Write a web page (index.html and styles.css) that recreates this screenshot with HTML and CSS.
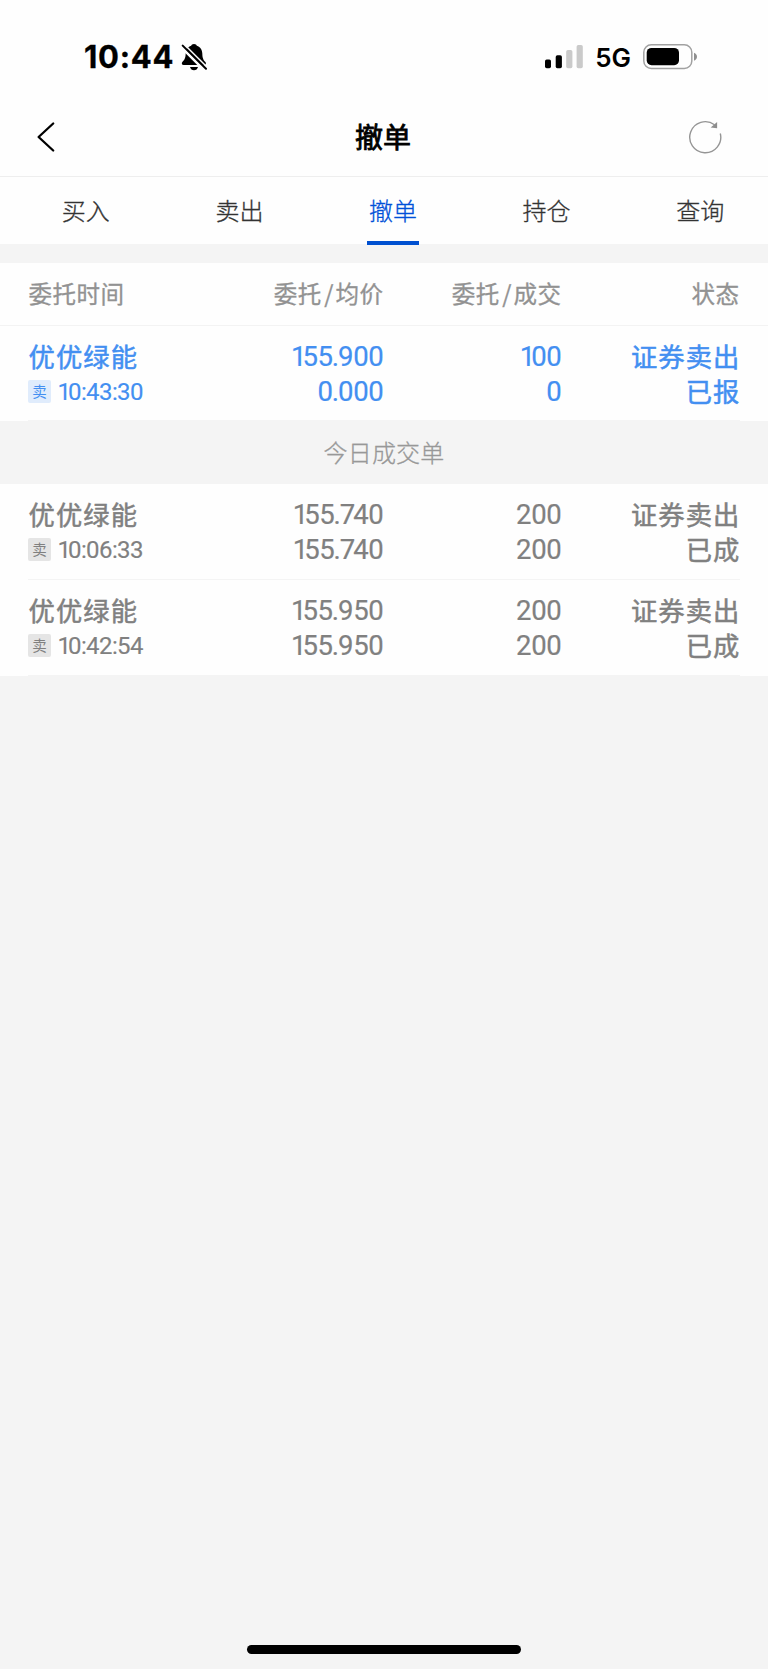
FILE: index.html
```html
<!DOCTYPE html>
<html lang="zh-CN">
<head>
<meta charset="utf-8">
<title>撤单</title>
<link rel="stylesheet" href="styles.css">
</head>
<body>
<div class="screen">
  <header class="status">
    <span class="clock">10:44</span>
    <svg class="bell" width="26" height="28" viewBox="0 0 26 28">
      <path d="M13 1C14.6 1 15.5 1.8 15.8 2.8C19.5 3.9 21.2 7 21.3 10.5C21.4 15.5 22.5 17 24.2 18.8C25.5 20.2 25 22 23 22H2.7C.7 22 .3 20.200 1.500 18.800C3.600 16.600 4.500 15 4.700 10.500C4.800 7 6.500 3.900 10.200 2.800C10.500 1.800 11.400 1 13 1Z"/>
      <path d="M9 24H17C16.500 26 15 27.300 13 27.300S9.500 26 9 24Z"/>
      <path d="M-.5 3.200L24 27.600" stroke="#fefefe" stroke-width="3"/>
      <path d="M2.600 .7L27 25.100" stroke="#fefefe" stroke-width="1.600"/>
      <path d="M1.700 2.600L25 25.800" stroke="#000" stroke-width="2" stroke-linecap="round"/>
    </svg>
    <div class="indicators">
      <svg class="signal" width="38" height="26" viewBox="0 0 38 26">
        <rect x="0" y="15.500" width="6" height="8.800" rx="1.700"/>
        <rect x="10.700" y="11.200" width="6.200" height="13.100" rx="1.700"/>
        <g fill="#cacaca"><rect x="21.200" y="6" width="6.200" height="18.300" rx="1.700"/><rect x="31.600" y="1" width="6.200" height="23.300" rx="1.700"/></g>
      </svg>
      <span class="network">5G</span>
      <svg class="battery" width="56" height="26" viewBox="0 0 56 26">
        <rect x=".8" y=".8" width="48" height="23.600" rx="7.500" fill="none" stroke="#a1a1a1" stroke-width="1.500"/>
        <rect x="3.700" y="3.900" width="32.300" height="17.300" rx="4.800"/>
        <path d="M51 8.800C55 10.200 55 15.400 51 16.800Z" fill="#8f8f8f"/>
      </svg>
    </div>
  </header>

  <nav class="navbar">
    <svg class="back" width="20" height="32" viewBox="0 0 20 32"><path d="M17.200 2.500L2.600 16L17.200 29.500" fill="none" stroke="#000" stroke-width="2.300" stroke-linecap="round" stroke-linejoin="round"/></svg>
    <h1 class="title">撤单</h1>
    <svg class="refresh" width="34" height="34" viewBox="0 0 34 34">
      <path d="M32.300 13.500A15.500 15.500 0 1 1 26.500 4.800" fill="none" stroke="#959595" stroke-width="1.400"/>
      <path d="M29.100 2V8.200L22.700 7.400Z" fill="#8d8d8d"/>
    </svg>
  </nav>

  <div class="tabs">
    <span class="tab">买入</span><span class="tab">卖出</span><span class="tab active">撤单</span><span class="tab">持仓</span><span class="tab">查询</span>
  </div>

  <div class="columns cols">
    <span>委托时间</span><span>委托<i class="slash">/</i>均价</span><span>委托<i class="slash">/</i>成交</span><span>状态</span>
  </div>

  <section class="order cols pending">
    <div class="cell"><span class="name">优优绿能</span><div class="meta"><span class="badge">卖</span><span class="time"><i class="one">1</i>0:43:30</span></div></div>
    <div class="cell num"><span><i class="one">1</i>55<i class="dot">.</i>900</span><span>0<i class="dot">.</i>000</span></div>
    <div class="cell num"><span><i class="one">1</i>00</span><span>0</span></div>
    <div class="cell state"><span>证券卖出</span><span>已报</span></div>
  </section>

  <div class="divider">今日成交单</div>

  <section class="order cols">
    <div class="cell"><span class="name">优优绿能</span><div class="meta"><span class="badge">卖</span><span class="time"><i class="one">1</i>0:06:33</span></div></div>
    <div class="cell num"><span><i class="one">1</i>55<i class="dot">.</i><i class="seven">7</i>40</span><span><i class="one">1</i>55<i class="dot">.</i><i class="seven">7</i>40</span></div>
    <div class="cell num"><span>200</span><span>200</span></div>
    <div class="cell state"><span>证券卖出</span><span>已成</span></div>
  </section>
  <section class="order cols">
    <div class="cell"><span class="name">优优绿能</span><div class="meta"><span class="badge">卖</span><span class="time"><i class="one">1</i>0:42:54</span></div></div>
    <div class="cell num"><span><i class="one">1</i>55<i class="dot">.</i>950</span><span><i class="one">1</i>55<i class="dot">.</i>950</span></div>
    <div class="cell num"><span>200</span><span>200</span></div>
    <div class="cell state"><span>证券卖出</span><span>已成</span></div>
  </section>

  <footer class="home"><div class="home-bar"></div></footer>
</div>
</body>
</html>
```
FILE: styles.css
```css
* { box-sizing: border-box; }
body { margin: 0; background: #f4f4f4; font-family: "Noto Sans CJK SC", sans-serif; }
i { font-style: normal; }
.screen { width: 768px; height: 1669px; display: flex; flex-direction: column; overflow: hidden; }
.screen > * { flex-shrink: 0; }
.status { height: 100px; padding: 14px 69px 0 84px; display: flex; align-items: center; background: #fefefe; font-family: Inter, sans-serif; }
.clock { font-size: 31px; font-weight: 700; line-height: 40px; letter-spacing: .7px; -webkit-text-stroke: .3px currentColor; }
.bell { margin-left: 7px; }
.indicators { margin-left: auto; display: flex; align-items: center; }
.network { margin-left: 12px; font-size: 26px; font-weight: 600; line-height: 30px; padding-top: 1px; }
.battery { margin-left: 12px; }
.navbar { height: 77px; padding: 0 46px 3px 36px; display: flex; align-items: center; justify-content: space-between; background: #fefefe; border-bottom: 1px solid #eee; }
.title { margin: 0 0 2px 22px; font-size: 28px; font-weight: 400; line-height: 40px; -webkit-text-stroke: .8px currentColor; }
.tabs { height: 67px; padding-left: 9px; display: grid; grid-template-columns: repeat(5, 153.600px); background: #fefefe; }
.tab { position: relative; text-align: center; font-size: 24px; font-weight: 300; line-height: 66px; color: #333; -webkit-text-stroke: .3px currentColor; }
.active { color: #0050d8; }
.active::after { content: ""; position: absolute; left: 50%; bottom: -1px; width: 52px; height: 4px; margin-left: -26px; background: #0050d0; }
.cols { display: grid; grid-template-columns: 200px 155.500px 178px 178px; padding: 0 28.500px 0 28px; background: #fefefe; }
.columns { height: 63px; margin-top: 19px; border-bottom: 1px solid #f3f3f3; color: #929292; font-size: 23.500px; line-height: 61px; letter-spacing: .5px; -webkit-text-stroke: .3px currentColor; white-space: nowrap; }
.columns span:first-child { padding-left: .5px; }
.columns span + span { display: flex; justify-content: flex-end; }
.slash { padding: 0 1.500px 0 2.500px; }
.order { position: relative; height: 96px; color: #808080; }
.order::after { content: ""; position: absolute; left: 28px; right: 28px; bottom: 0; height: 1px; background: #f4f4f4; }
.pending { height: 95px; color: #438ff1; }
.cell { display: flex; flex-direction: column; padding-top: 13px; line-height: 35px; white-space: nowrap; }
.name, .state { font-size: 26.300px; letter-spacing: 1.100px; -webkit-text-stroke: .5px currentColor; }
.name { height: 35px; padding-left: .5px; line-height: 33px; }
.state { align-items: flex-end; padding-top: 12px; }
.state span { margin-right: -1px; }
.num { align-items: flex-end; font: 27.500px/35px Roboto, sans-serif; letter-spacing: -.3px; -webkit-text-stroke: .2px currentColor; }
.one { letter-spacing: -3px; }
.dot { letter-spacing: -1px; margin-left: -1px; }
.num .one { letter-spacing: -4px; }
.seven { letter-spacing: -2px; }
.meta { display: flex; align-items: center; height: 35px; }
.badge { width: 23px; height: 23px; border-radius: 2px; background: #e5e5e5; font-size: 14.500px; line-height: 21px; text-align: center; }
.pending .badge { background: #e0ecfc; }
.time { margin-left: 6.500px; padding-top: 1px; font: 24px/35px Roboto, sans-serif; letter-spacing: -.6px; -webkit-text-stroke: .15px currentColor; }
.divider { height: 63px; color: #989898; font-size: 24px; font-weight: 300; line-height: 62px; text-align: center; letter-spacing: .2px; -webkit-text-stroke: .3px currentColor; }
.home { margin-top: auto; height: 24px; display: flex; justify-content: center; }
.home-bar { width: 274px; height: 9px; border-radius: 5px; background: #000; }
```
